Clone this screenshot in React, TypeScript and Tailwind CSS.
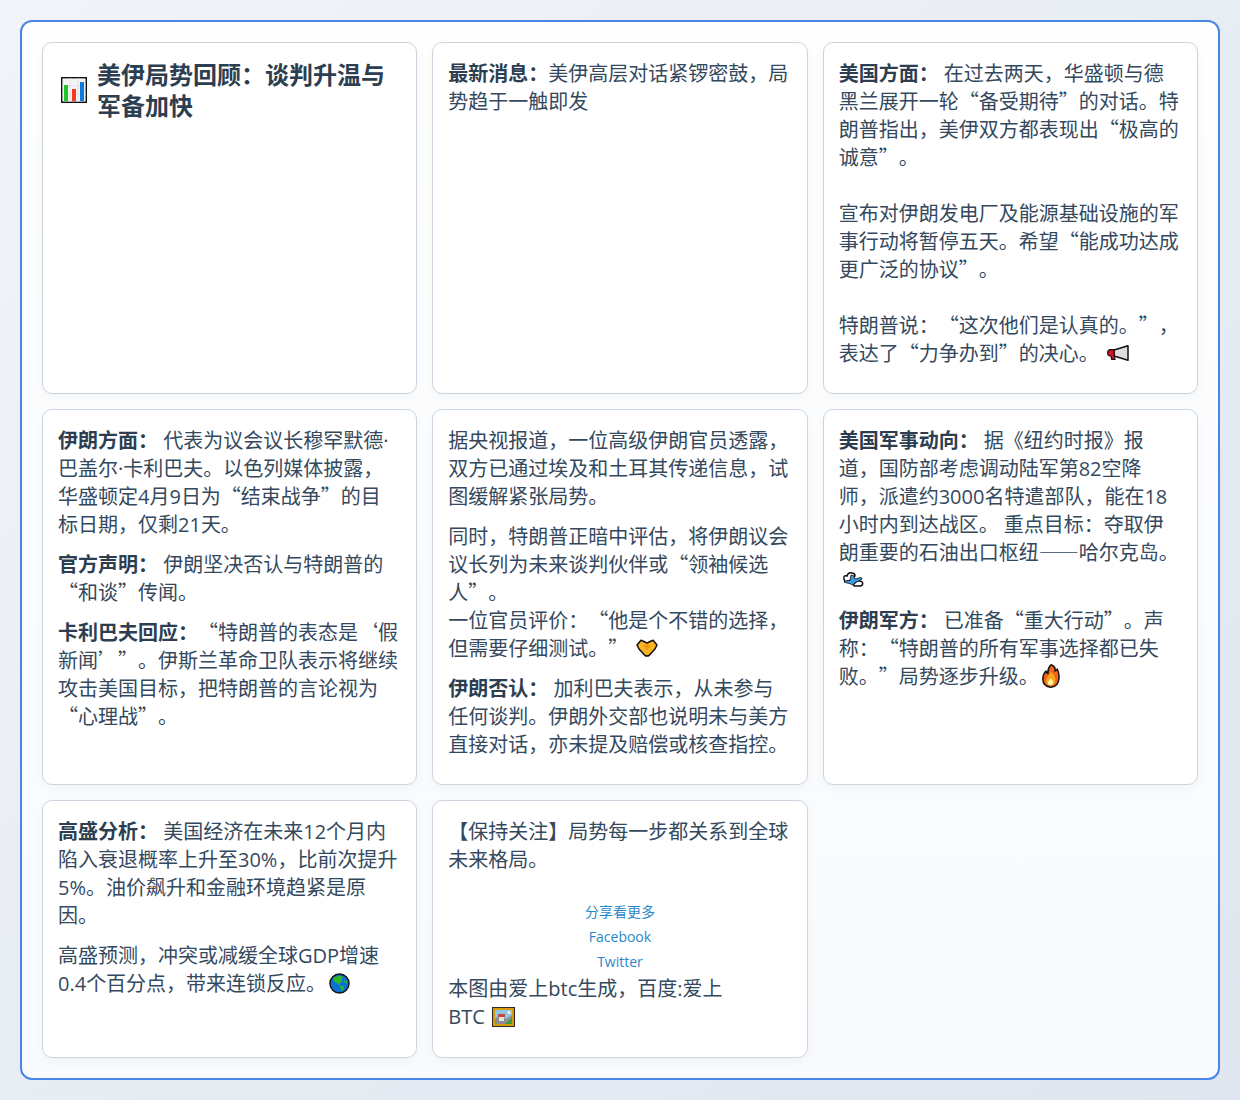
import React from "react";

const L = ({ children }: { children: React.ReactNode }) => (
  <span className="font-['Open_Sans',sans-serif] leading-none">{children}</span>
);

const B = ({ children }: { children: React.ReactNode }) => (
  <strong className="font-bold text-[#2c3e50]">{children}</strong>
);

const Sp = () => <span className="font-['Open_Sans',sans-serif] leading-none"> </span>;

const Chart = ({ className }: { className?: string }) => (
  <svg viewBox="0 0 26 26" className={className}>
    <rect x="0.7" y="0.7" width="24.6" height="24.6" fill="#f4f4f4" stroke="#111" strokeWidth="1.4" />
    <path d="M1 9h24M1 17h24M9 1v24M17 1v24" stroke="#e2e2e2" strokeWidth="1" />
    <rect x="3" y="8" width="4" height="16" fill="#22c52e" />
    <rect x="11" y="12" width="4" height="12" fill="#f23a1d" />
    <rect x="19" y="5" width="4" height="19" fill="#0c7de0" />
  </svg>
);

const Megaphone = ({ className }: { className?: string }) => (
  <svg viewBox="0 0 22 16" className={className}>
    <path d="M21 .8 L7 5 L7 11 L21 15.2 Z" fill="#dedede" stroke="#111" strokeWidth="1.5" strokeLinejoin="round" />
    <path d="M7 4.6 L3 4.6 Q.6 5 .7 8 Q.8 10.6 3 11 L4 11 L4.6 14.4 L8 14.4 L7.2 11 Z" fill="#e20f24" stroke="#111" strokeWidth="1.2" strokeLinejoin="round" />
  </svg>
);

const Handshake = ({ className }: { className?: string }) => (
  <svg viewBox="0 0 22 18" className={className}>
    <path d="M1 6 L5 1.2 L9 3 L11 4.2 L13 3 L17 1.2 L21 6 L19 10 L13 16.5 Q11 17.6 9 16.5 L3 10 Z" fill="#fbb423" stroke="#111" strokeWidth="1.5" strokeLinejoin="round" />
    <path d="M7 7 L11 11 L15 7 L11 4.5 Z" fill="#f09a12" />
  </svg>
);

const Plane = ({ className }: { className?: string }) => (
  <svg viewBox="0 0 22 16" className={className}>
    <path d="M2 8 Q1 4 5 5 Q6 1 10 2 Q13 2 13 5 L9 9 L3 11 Z" fill="#fff" stroke="#111" strokeWidth="1.5" />
    <path d="M13 12 Q15 9 18 10 Q21.5 11 20.5 13.5 Q20 15 17 15 L13 15 Q10 14.5 13 12 Z" fill="#fff" stroke="#111" strokeWidth="1.5" />
    <path d="M3 10.5 Q4 9 8 9.5 L9 4 L11.5 4.5 L13 8 L19 6.5 Q21 7 19 9 L13 11.5 L11 14 L7.5 12.5 Q3 12 3 10.5 Z" fill="#3a9be0" stroke="#111" strokeWidth="0.8" strokeLinejoin="round" />
  </svg>
);

const Fire = ({ className }: { className?: string }) => (
  <svg viewBox="0 0 18 24" className={className}>
    <path d="M9 .8 Q14 2.5 13 7 Q15 6.5 15.2 5 Q17.4 9 17 14 Q16.5 22.6 9 23.2 Q1 22.8 .8 15 Q1 10 4 7 Q4.5 9 6 9.5 Q5.5 4 9 .8 Z" fill="#f4621c" stroke="#111" strokeWidth="1.5" strokeLinejoin="round" />
    <path d="M9 8 Q13 11 13.5 15.5 Q13.5 21 9 21.6 Q4 21 4 16.5 Q5 12 9 8 Z" fill="#fba51d" />
    <path d="M8.5 14.5 Q12 17 11 19.5 Q10 21.4 8 21.4 Q5 20.5 6 18 Q7 16.5 8.5 14.5 Z" fill="#fff3a6" />
  </svg>
);

const Globe = ({ className }: { className?: string }) => (
  <svg viewBox="0 0 22 22" className={className}>
    <circle cx="11" cy="11" r="10" fill="#0a72d6" stroke="#111" strokeWidth="1.5" />
    <path d="M5 4.5 L11 3 L15 4 L13 6 L14 9 L11.5 10.5 L11 13 L9 11 L6 9.5 L4.5 7 Z" fill="#2fb52a" />
    <path d="M11 13 L15 13.5 L16 16 L14 19 L12.5 17 Z" fill="#2fb52a" />
    <path d="M16 7 L19 9 L18.5 11 L16 9.5 Z" fill="#2fb52a" />
  </svg>
);

const Picture = ({ className }: { className?: string }) => (
  <svg viewBox="0 0 23 20" className={className}>
    <rect x="0.5" y="0.5" width="22" height="19" fill="#d99a0a" stroke="#2b2b2b" strokeWidth="1" />
    <rect x="3" y="3" width="17" height="14" fill="#8ec6ea" />
    <path d="M3 12 L9 7 L14 12 L20 8 L20 17 L3 17 Z" fill="#8e8e92" />
    <path d="M13 17 L20 11 L20 17 Z" fill="#35a035" />
    <rect x="6" y="7" width="7" height="3" fill="#c8473a" />
    <rect x="7" y="10" width="5" height="4" fill="#e9e4dc" />
    <circle cx="17" cy="5.5" r="1.6" fill="#fff6c4" />
  </svg>
);

const Card = ({ children }: { children: React.ReactNode }) => (
  <div className="rounded-[10px] border border-[#cbd5e0] bg-white px-[15px] pb-[14px] pt-[16px] shadow-[0_4px_12px_rgba(0,0,0,0.03)]">
    {children}
  </div>
);

const P = ({ children }: { children: React.ReactNode }) => <p className="mb-3">{children}</p>;

export default function App() {
  return (
    <div
      lang="zh-CN"
      className="min-h-[1100px] bg-gradient-to-br from-[#f1f4f8] to-[#dfe6ef] p-5 font-['Noto_Sans_CJK_SC','Open_Sans',sans-serif] text-[20px] leading-[28px] text-[#34495e] [text-spacing-trim:space-all]"
    >
      <div className="h-[1060px] rounded-xl border-2 border-[#4a86e8] bg-gradient-to-b from-[#fefefe] to-[#f8fafd] p-5">
        <div className="grid grid-cols-3 grid-rows-[352px_376px_258px] gap-[15px]">
          <Card>
            <h2 className="-mt-px flex items-center text-[24px] font-bold leading-[31px] text-[#2c3e50]">
              <Chart className="ml-[3px] mr-[10px] mt-[2px] h-[26px] w-[26px] shrink-0" />
              <span>美伊局势回顾：谈判升温与军备加快</span>
            </h2>
          </Card>
          <Card>
            <P>
              <B>最新消息：</B>美伊高层对话紧锣密鼓，局势趋于一触即发
            </P>
          </Card>
          <Card>
            <P>
              <B>美国方面：</B>
              <Sp />
              在过去两天，华盛顿与德黑兰展开一轮“备受期待”的对话。特朗普指出，美伊双方都表现出“极高的诚意”。
              <br />
              <br />
              宣布对伊朗发电厂及能源基础设施的军事行动将暂停五天。希望“能成功达成更广泛的协议”。
              <br />
              <br />
              特朗普说：“这次他们是认真的。”，表达了“力争办到”的决心。
              <Megaphone className="-my-2 ml-[8px] inline-block h-4 w-[22px] align-[8px]" />
            </P>
          </Card>

          <Card>
            <P>
              <B>伊朗方面：</B>
              <Sp />
              代表为议会议长穆罕默德<L>·</L>巴盖尔<L>·</L>卡利巴夫。以色列媒体披露，华盛顿定<L>4</L>月<L>9</L>日为“结束战争”的目
              <br />
              标日期，仅剩<L>21</L>天。
            </P>
            <P>
              <B>官方声明：</B>
              <Sp />
              伊朗坚决否认与特朗普的“和谈”传闻。
            </P>
            <P>
              <B>卡利巴夫回应：</B>“特朗普的表态是‘假新闻’”。伊斯兰革命卫队表示将继续攻击美国目标，把特朗普的言论视为“心理战”。
            </P>
          </Card>
          <Card>
            <P>据央视报道，一位高级伊朗官员透露，双方已通过埃及和土耳其传递信息，试图缓解紧张局势。</P>
            <P>
              同时，特朗普正暗中评估，将伊朗议会议长列为未来谈判伙伴或“领袖候选人”。
              <br />
              一位官员评价：“他是个不错的选择，但需要仔细测试。”
              <Handshake className="-my-2 ml-[8px] inline-block h-[18px] w-[22px] align-[7px]" />
            </P>
            <P>
              <B>伊朗否认：</B>
              <Sp />
              加利巴夫表示，从未参与任何谈判。伊朗外交部也说明未与美方直接对话，亦未提及赔偿或核查指控。
            </P>
          </Card>
          <Card>
            <P>
              <B>美国军事动向：</B>
              <Sp />
              据《纽约时报》报道，国防部考虑调动陆军第<L>82</L>空降
              <br />
              师，派遣约<L>3000</L>名特遣部队，能在<L>18</L>
              <br />
              小时内到达战区。<Sp />重点目标：夺取伊朗重要的石油出口枢纽——哈尔克岛。
              <br />
              <Plane className="-my-2 ml-[3px] inline-block h-4 w-[22px] align-[9px]" />
            </P>
            <P>
              <B>伊朗军方：</B>
              <Sp />
              已准备“重大行动”。声称：“特朗普的所有军事选择都已失败。”局势逐步升级。
              <Fire className="-my-3 ml-[3px] inline-block h-6 w-[18px] align-[8px]" />
            </P>
          </Card>

          <Card>
            <P>
              <B>高盛分析：</B>
              <Sp />
              美国经济在未来<L>12</L>个月内陷入衰退概率上升至<L>30%</L>，比前次提升<L>5%</L>。油价飙升和金融环境趋紧是原因。
            </P>
            <P>
              高盛预测，冲突或减缓全球<L>GDP</L>增速<L>0.4</L>个百分点，带来连锁反应。
              <Globe className="-my-3 ml-[3px] inline-block h-[21px] w-[21px] align-[9px]" />
            </P>
          </Card>
          <Card>
            <P>【保持关注】局势每一步都关系到全球未来格局。</P>
            <div className="mt-[26px] text-center text-[14px] leading-[25px] text-[#2b88c8]">
              <div>分享看更多</div>
              <div className="font-['Open_Sans',sans-serif]">Facebook</div>
              <div className="font-['Open_Sans',sans-serif]">Twitter</div>
            </div>
            <P>
              本图由爱上<L>btc</L>生成，百度<L>:</L>爱上
              <br />
              <L>BTC</L>
              <Picture className="-my-3 ml-[7px] inline-block h-5 w-[23px] align-[9px]" />
            </P>
          </Card>
        </div>
      </div>
    </div>
  );
}
